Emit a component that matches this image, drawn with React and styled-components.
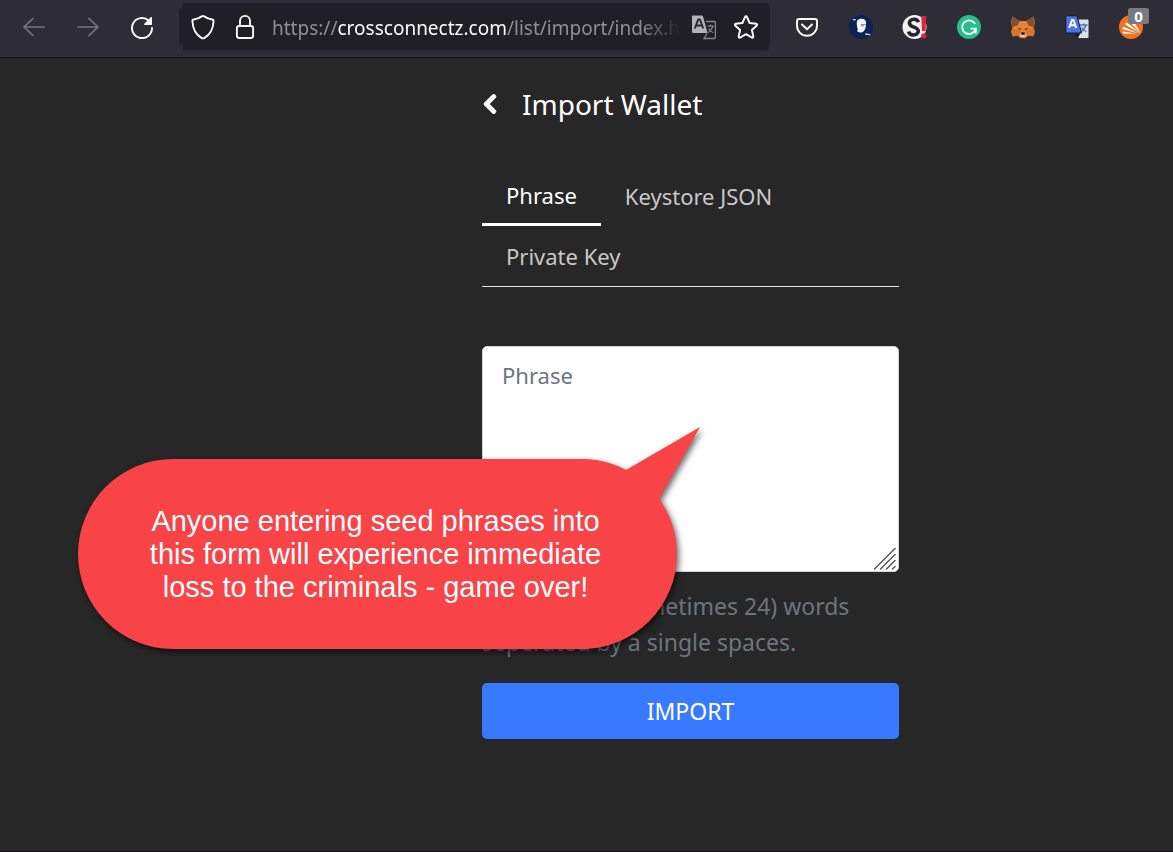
import React, { useState } from "react";
import styled, { createGlobalStyle } from "styled-components";
import { FaChevronLeft } from "react-icons/fa";

const tabList = ["Phrase", "Keystore JSON", "Private Key"];

const BackIcon = () => (
  <svg width="24" height="24" viewBox="0 0 24 24" fill="none" stroke="currentColor" strokeWidth="1.7" strokeLinecap="round" strokeLinejoin="round">
    <path d="M22 12H2M11 3.5 2 12l9 8.5" />
  </svg>
);

const ForwardIcon = () => (
  <svg width="24" height="24" viewBox="0 0 24 24" fill="none" stroke="currentColor" strokeWidth="1.7" strokeLinecap="round" strokeLinejoin="round">
    <path d="M2 12h20M13 3.5 22 12l-9 8.5" />
  </svg>
);

const ReloadIcon = () => (
  <svg width="24" height="24" viewBox="0 0 24 24" fill="none">
    <path d="M22 13a10 10 0 1 1-3.2-7.3" stroke="#fbfbfe" strokeWidth="1.9" strokeLinecap="round" />
    <path d="M22 2.8v6.4c0 .5-.3.8-.8.8h-6.4c-.7 0-1-.8-.5-1.3l6.4-6.4c.5-.5 1.3-.2 1.3.5z" fill="#fbfbfe" />
  </svg>
);

const ShieldIcon = () => (
  <svg width="26" height="26" viewBox="0 0 26 26" fill="none" stroke="#fbfbfe" strokeWidth="1.9" strokeLinejoin="round">
    <path d="M13 1.9c.5 0 .9.2 1.3.5 2.4 1.7 5 2.7 7.9 3.1.9.1 1.5.9 1.4 1.8-.5 7.3-3.1 13.2-9 16.6-1 .6-2.2.6-3.2 0C5.5 20.500 2.900 14.600 2.400 7.300c-.1-.9.5-1.700 1.400-1.800 2.900-.4 5.500-1.400 7.900-3.100.4-.3.8-.5 1.300-.5z" />
  </svg>
);

const LockIcon = () => (
  <svg width="26" height="26" viewBox="0 0 26 26" fill="none" stroke="#fbfbfe" strokeWidth="1.9">
    <rect x="4.9" y="12" width="16.2" height="12" rx="2.2" />
    <path d="M8 12V6.900a5 5 0 0 1 10 0V12" />
  </svg>
);

const PageTranslateIcon = () => (
  <svg width="26" height="26" viewBox="0 0 26 26" fill="none">
    <path d="M15 7.500h8.200c.7 0 1.200.5 1.200 1.200v14.600c0 .7-.5 1.200-1.200 1.200H13l3-5" stroke="#87868c" strokeWidth="1.3" />
    <path d="M16.500 12.200h6.500M19.600 10.500v1.700M21.800 12.200c-.6 2.600-2.300 4.800-4.800 6.200M17.700 14.500c.8 1.700 2.500 3.400 4.600 4.300" stroke="#87868c" strokeWidth="1.2" />
    <path d="M2.200 1.500h8.300c.8 0 1.400.5 1.600 1.200L16.500 19H2.200C1.500 19 1 18.500 1 17.800V2.700c0-.7.5-1.200 1.200-1.200z" fill="#b3b2b7" />
    <path d="m3.800 14.500 3.400-9h1.700l3.400 9M5.100 11.500h5.900" stroke="#2b2a33" strokeWidth="1.9" />
  </svg>
);

const StarIcon = () => (
  <svg width="26" height="26" viewBox="0 0 26 26" fill="none" stroke="#fbfbfe" strokeWidth="2" strokeLinejoin="round">
    <path d="M13.900 2.900l2.700 6.100 6.600.7c.9.100 1.200 1.100.6 1.700l-4.900 4.500 1.400 6.500c.2.900-.7 1.500-1.500 1.100L13 20.200l-5.800 3.300c-.8.400-1.700-.2-1.500-1.100l1.400-6.500-4.900-4.500c-.6-.6-.3-1.600.6-1.700l6.600-.7 2.700-6.100c.4-.8 1.500-.8 1.800 0z" />
  </svg>
);

const PocketIcon = () => (
  <svg width="26" height="26" viewBox="0 0 26 26" fill="none" stroke="#fbfbfe" strokeWidth="1.9" strokeLinecap="round" strokeLinejoin="round">
    <path d="M5.200 5h15.600c1.300 0 2.200.9 2.200 2.200v4.600a10 10 0 0 1-20 0V7.200C3 5.900 3.900 5 5.200 5z" />
    <path d="m8 10.500 5 4.700 5-4.700" />
  </svg>
);

const FaceIcon = () => (
  <svg width="26" height="26" viewBox="0 0 26 26">
    <circle cx="13" cy="13" r="12" fill="#0c2256" />
    <path d="M8.800 10c-.4-3.500 1.600-5.200 4.600-5.200 3.200 0 4.900 1.800 4.700 5-.1 2.900-.8 5.700-2.400 7.400-1.400 1.500-4 1.600-5.500.9-1.200-.6-1-1.900-.3-3.100-.6-1-1-2.700-1.100-5z" fill="#f4f6fa" />
    <path d="M12.700 10.600h5.300M13.700 10.600v1.300h1.600v-1.300" stroke="#68728d" strokeWidth=".8" fill="none" />
    <path d="M4.800 5.600h3M17.200 20l5 .6" stroke="#cfd6e8" strokeWidth="1.300" />
  </svg>
);

const SkipIcon = () => (
  <svg width="26" height="26" viewBox="0 0 26 26" fill="none">
    <circle cx="12.500" cy="13" r="12" fill="#f3f3f5" />
    <path d="M16.500 8.200c-.8-2-2.400-3-4.400-3-2.800 0-4.700 1.600-4.700 3.900 0 5 8.900 3 8.900 8 0 2.300-2.100 3.900-4.800 3.900-2.500 0-4.300-1.300-5-3.600" stroke="#25242e" strokeWidth="3.600" />
    <path d="M19.300 2h4.900l-.6 15h-3.700z" fill="#df2338" />
    <circle cx="21.800" cy="21.800" r="2.600" fill="#df2338" />
  </svg>
);

const GrammarIcon = () => (
  <svg width="26" height="26" viewBox="0 0 26 26" fill="none">
    <circle cx="13" cy="13" r="12" fill="#27bd8c" />
    <path d="M18.600 9.300A6.800 6.800 0 1 0 19.600 15" stroke="#fff" strokeWidth="1.900" strokeLinecap="round" />
    <path d="M14.500 14.600h5.300v5" stroke="#fff" strokeWidth="1.900" />
  </svg>
);

const FoxIcon = () => (
  <svg width="26" height="26" viewBox="0 0 26 26">
    <path d="M2.300 2.300 9.600 7h6.800l7.300-4.700 1.300 6-1.300 5.400 1.300 4-1.600 4.800-4.600-.7-3.600 2.400h-4.400l-3.600-2.400-4.600.7L1 17.700l1.300-4L1 8.300z" fill="#df7426" />
    <path d="m2.300 2.300 7.300 5.100-1.900 4.100-4.900 1.700L1.400 8.300zM23.700 2.300l-7.300 5.100 1.900 4.100 4.900 1.700 1.400-4.900z" fill="#85502f" />
    <path d="m2.800 13.200 4.900-1.700 1.900-4.100h6.800l1.900 4.100 4.900 1.700-1.600 1.700-5.500 1.400-1.600 3.200h-3l-1.600-3.200-5.500-1.400z" fill="#e8833a" />
    <path d="m8 13.600 2.900.9.400 1.500-2.500-.5zM18 13.600l-2.900.9-.4 1.500 2.500-.5z" fill="#713d20" />
    <path d="m9.300 20 1.900-.8h3.600l1.900.8-1.700 3.200h-4z" fill="#d9c8bd" />
    <path d="m11.300 18.800.5-.6h2.400l.5.6.1 2h-3.600z" fill="#221b18" />
  </svg>
);

const TranslateIcon = () => (
  <svg width="26" height="26" viewBox="0 0 26 26" fill="none">
    <path d="M13 5.500h10.500c.5 0 1 .4 1 1v16.500c0 .5-.4 1-1 1H14z" fill="#dcdfe5" />
    <path d="M16 11h7.500M19.700 9.500V11M22 11c-.7 2.900-2.300 5-5 6.600M17.500 13.500c.9 1.800 2.600 3.300 4.900 4.200" stroke="#4c72cb" strokeWidth="1.400" />
    <path d="m11.500 19.500 5-.5-2.700 5.500z" fill="#17191f" />
    <path d="M3 1.800h9.200c.6 0 1 .3 1.200.9l4 16.300H3c-.7 0-1.200-.5-1.200-1.200V3c0-.7.5-1.200 1.200-1.200z" fill="#4a75e6" stroke="#111526" strokeWidth="1" />
    <path d="m5.100 14 2.900-8h1.400l2.900 8M6.300 11.300h4.800" stroke="#fff" strokeWidth="1.900" />
  </svg>
);

const RaysIcon = () => (
  <svg width="26" height="26" viewBox="0 0 26 26">
    <circle cx="13" cy="13" r="12" fill="#ee7423" />
    <path d="M22.800 19.500 12.800 9c-1.300-1.600.6-4 2.500-2.500z" fill="#fff" />
    <path d="M22 19.200 8 11c-1.400-1-.3-2.900 1.400-2.200z" fill="#fff" />
    <path d="M20.500 19.400 5.300 15.300c-1.400-.5-.9-2.400.7-2.200z" fill="#fff" />
    <path d="M18 19.700 5.600 19.400c-1.200 0-1.200-1.700 0-1.800z" fill="#fff" />
  </svg>
);

const extensions = [
  { name: "Pocket", icon: <PocketIcon /> },
  { name: "Profile", icon: <FaceIcon /> },
  { name: "Skip", icon: <SkipIcon /> },
  { name: "Grammar", icon: <GrammarIcon /> },
  { name: "Fox wallet", icon: <FoxIcon /> },
  { name: "Translate", icon: <TranslateIcon /> },
  { name: "Protection", icon: <RaysIcon />, count: 0 },
];

const App = () => {
  const [tab, setTab] = useState("Phrase");
  return (
    <>
      <GlobalStyle />
      <PageLayout>
        <Toolbar>
          <ToolButton aria-label="Back" disabled>
            <BackIcon />
          </ToolButton>
          <ToolButton aria-label="Forward" disabled>
            <ForwardIcon />
          </ToolButton>
          <ToolButton aria-label="Reload">
            <ReloadIcon />
          </ToolButton>
          <AddressBar>
            <AddressButton aria-label="Tracking protection">
              <ShieldIcon />
            </AddressButton>
            <AddressButton aria-label="Connection">
              <LockIcon />
            </AddressButton>
            <Address>
              https://<b>crossconnectz.com</b>/list/import/index.html
            </Address>
            <AddressButton aria-label="Translate page">
              <PageTranslateIcon />
            </AddressButton>
            <AddressButton aria-label="Bookmark">
              <StarIcon />
            </AddressButton>
          </AddressBar>
          <ExtensionList>
            {extensions.map((ext) => (
              <ToolButton key={ext.name} aria-label={ext.name}>
                {ext.icon}
                {ext.count !== undefined && <Badge>{ext.count}</Badge>}
              </ToolButton>
            ))}
          </ExtensionList>
        </Toolbar>

        <MainLayout>
          <WalletForm onSubmit={(e) => e.preventDefault()}>
            <Header>
              <HeaderButton type="button" aria-label="Go back">
                <FaChevronLeft />
              </HeaderButton>
              <Title>Import Wallet</Title>
            </Header>
            <TabLayout role="tablist">
              {tabList.map((name) => (
                <Tab
                  key={name}
                  type="button"
                  role="tab"
                  aria-selected={tab === name}
                  $active={tab === name}
                  onClick={() => setTab(name)}
                >
                  {name}
                </Tab>
              ))}
            </TabLayout>
            <FieldLayout>
              <PhraseInput aria-label="Phrase" placeholder="Phrase" />
              <Grip width="24" height="24" viewBox="0 0 24 24">
                <path d="M1.500 22 22 1.500M7.500 22 22 7.500M13.500 22l8.500-8.500M19.500 22l2.500-2.500" />
              </Grip>
            </FieldLayout>
            <HelpText>
              Typically 12 (sometimes 24) words seperated by a single spaces.
            </HelpText>
            <ImportButton>IMPORT</ImportButton>
            <Callout role="note">
              <CalloutTail width="80" height="80" viewBox="0 0 80 80">
                <path d="M5 43 79 0 38 72 0 80z" />
              </CalloutTail>
              <CalloutBody>
                Anyone entering seed phrases into this form will experience
                immediate loss to the criminals - game over!
              </CalloutBody>
            </Callout>
          </WalletForm>
        </MainLayout>
      </PageLayout>
    </>
  );
};

const GlobalStyle = createGlobalStyle`
  * {
    box-sizing: border-box;
  }
  body {
    margin: 0;
    background-color: #272727;
    font-family: "Noto Sans", "Open Sans", sans-serif;
  }
  button {
    font-family: inherit;
    padding: 0;
    border: 0;
    background: none;
  }
`;
const PageLayout = styled.div`
  display: flex;
  flex-direction: column;
  min-height: 100vh;
  border-bottom: 1px solid #1b191d;
`;
const Toolbar = styled.header`
  display: flex;
  align-items: center;
  height: 58px;
  padding: 0 15px 4px 7px;
  background-color: #2e2d37;
  border-bottom: 1px solid #131316;
`;
const ToolButton = styled.button`
  position: relative;
  display: flex;
  flex: none;
  align-items: center;
  justify-content: center;
  width: 54px;
  height: 48px;
  color: #fbfbfe;
  &:disabled {
    color: #77767e;
  }
`;
const AddressBar = styled.div`
  display: flex;
  flex: 1;
  align-items: center;
  min-width: 0;
  height: 48px;
  margin: 0 10px;
  padding: 0 3px;
  background-color: #201f26;
  border-radius: 0 6px 6px 0;
  clip-path: polygon(4px 0, 100% 0, 100% 100%, 4px 100%, 4px 42px, 0 42px, 0 6px, 4px 6px);
`;
const AddressButton = styled.button`
  display: flex;
  flex: none;
  align-items: center;
  justify-content: center;
  width: 42px;
  height: 42px;
`;
const Address = styled.div`
  flex: 1;
  min-width: 0;
  margin: 0 2px 0 6px;
  padding-top: 2px;
  overflow: hidden;
  white-space: nowrap;
  font-size: 19px;
  line-height: 32px;
  color: #8f8e94;
  mask-image: linear-gradient(to left, transparent, #000 40px);
  b {
    font-weight: 400;
    color: #fbfbfe;
  }
`;
const ExtensionList = styled.div`
  display: flex;
`;
const Badge = styled.span`
  position: absolute;
  top: 5px;
  right: 9px;
  width: 21px;
  height: 16px;
  border-radius: 2px;
  background-color: #797983;
  color: #ffffff;
  font-size: 15px;
  font-weight: 700;
  line-height: 16px;
  text-align: center;
`;
const MainLayout = styled.main`
  display: grid;
  grid-template-columns: 482fr 417fr 274fr;
`;
const WalletForm = styled.form`
  position: relative;
  grid-column: 2;
  display: flex;
  flex-direction: column;
  min-width: 0;
  padding: 24px 0;
`;
const Header = styled.div`
  display: flex;
  align-items: center;
  height: 44px;
`;
const HeaderButton = styled.button`
  display: flex;
  width: 40px;
  color: #ffffff;
  font-size: 22px;
  svg {
    width: 16px;
    stroke: currentColor;
    stroke-width: 32px;
  }
`;
const Title = styled.h1`
  margin: 0;
  color: #ffffff;
  font-size: 28px;
  font-weight: 400;
  line-height: 44px;
`;
const TabLayout = styled.div`
  display: flex;
  flex-wrap: wrap;
  margin-top: 40px;
  border-bottom: 1px solid #e4e4e4;
`;
const Tab = styled.button`
  height: 60px;
  padding: 0 24px;
  border-bottom: ${(props) => (props.$active ? "3px solid #ffffff" : "0")};
  color: ${(props) => (props.$active ? "#ffffff" : "#cbc8c8")};
  font-size: 22px;
`;
const FieldLayout = styled.div`
  position: relative;
  display: flex;
  margin-top: 59px;
`;
const PhraseInput = styled.textarea`
  width: 100%;
  height: 226px;
  padding: 10px 19px;
  border: 1px solid #ced4da;
  border-radius: 5px;
  background-color: #ffffff;
  color: #495057;
  font-family: inherit;
  font-size: 22px;
  line-height: 36px;
  resize: none;
  &::placeholder {
    color: #6c757d;
    opacity: 1;
  }
`;
const Grip = styled.svg`
  position: absolute;
  right: 2px;
  bottom: 1px;
  fill: none;
  stroke: #5c5c5c;
  stroke-width: 1.6;
  stroke-linecap: round;
`;
const HelpText = styled.p`
  margin: 16px 0 23px;
  color: #6c757d;
  font-size: 23px;
  line-height: 36px;
`;
const ImportButton = styled.button`
  height: 56px;
  border-radius: 5px;
  background-color: #387aff;
  color: #ffffff;
  font-size: 23px;
`;
const Callout = styled.div`
  position: absolute;
  top: 401px;
  left: -404px;
  width: 599px;
  filter: drop-shadow(2px 3px 3px rgba(0, 0, 0, 0.6));
`;
const CalloutTail = styled.svg`
  position: absolute;
  top: -32px;
  right: -24px;
  fill: #f84447;
`;
const CalloutBody = styled.p`
  display: flex;
  align-items: center;
  height: 190px;
  margin: 0;
  padding: 0 66px 0 62px;
  border-radius: 95px;
  background-color: #f84447;
  color: #ffffff;
  font-family: "Liberation Sans", Arial, sans-serif;
  font-size: 29px;
  line-height: 33px;
  text-align: center;
`;

export default App;
